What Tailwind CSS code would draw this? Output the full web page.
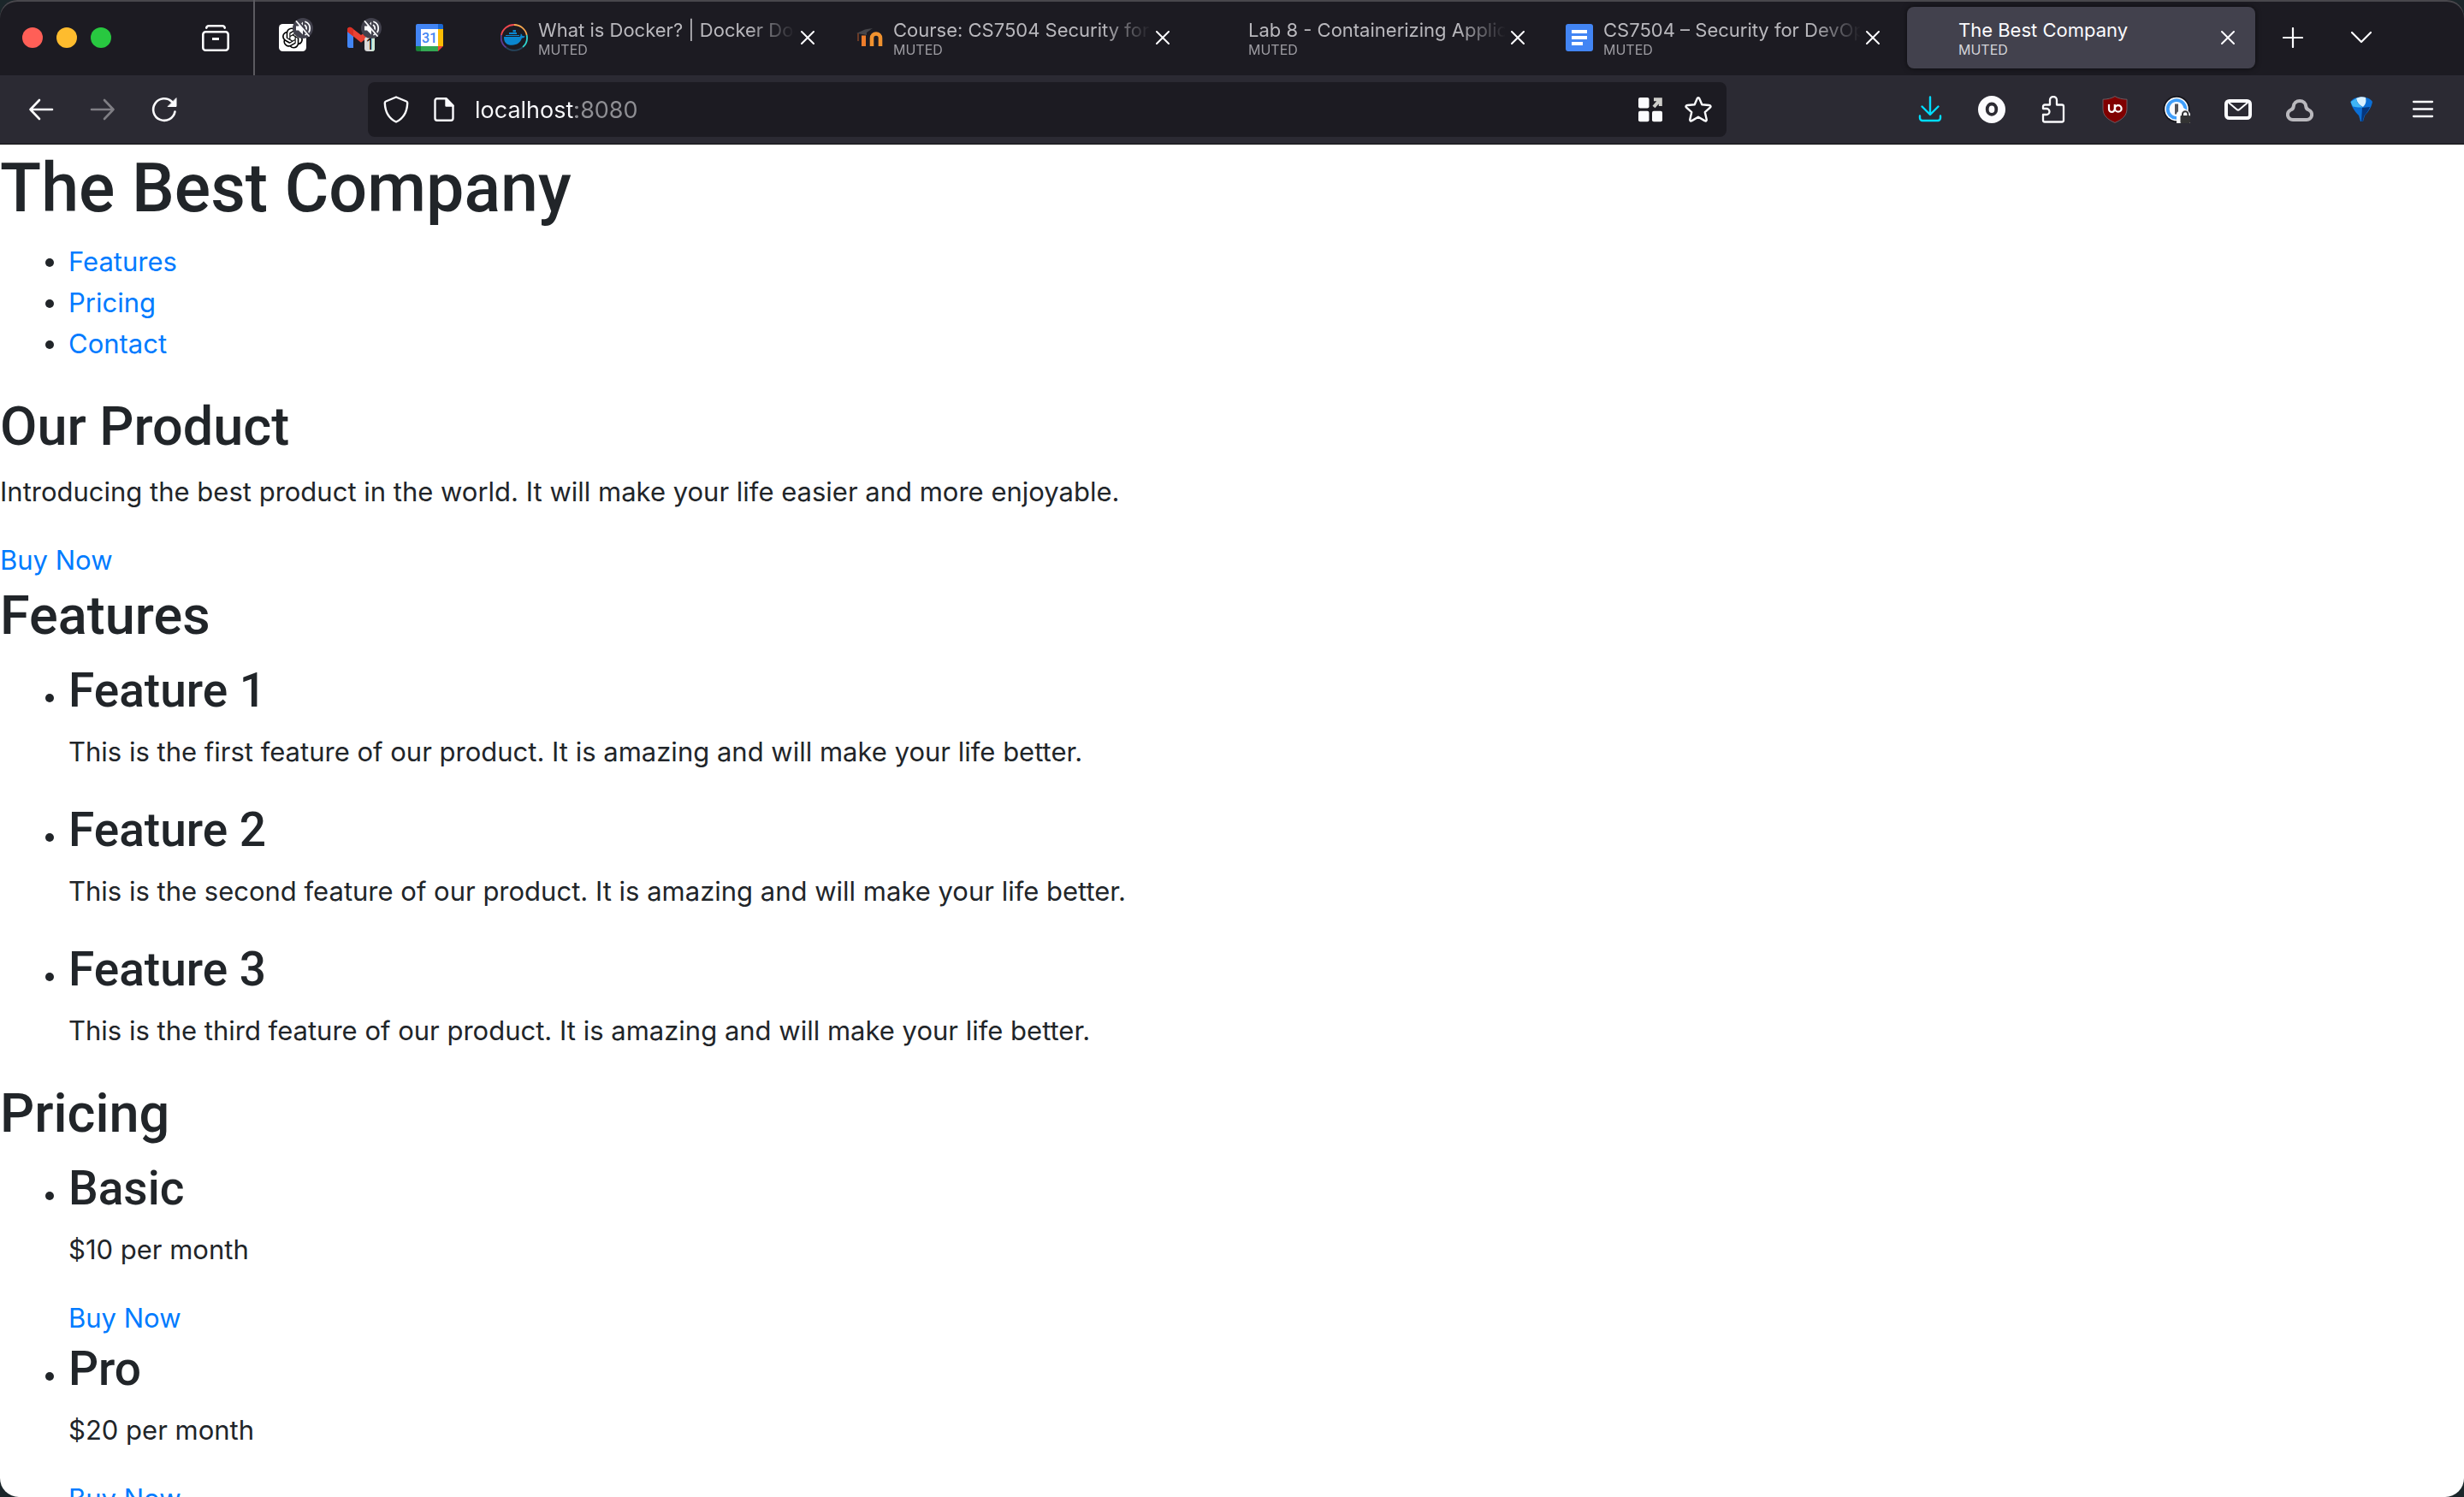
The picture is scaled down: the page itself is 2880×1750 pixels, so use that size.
<!DOCTYPE html>
<html lang="en">
<head>
<meta charset="utf-8">
<title>The Best Company</title>
<script src="https://cdn.jsdelivr.net/npm/@tailwindcss/browser@4"></script>
</head>
<body class="flex h-screen flex-col overflow-hidden bg-[#1b262a] font-['Inter',sans-serif] text-[#212529]">

<svg class="hidden" aria-hidden="true">
  <symbol id="close" viewBox="0 0 16 16"><path d="M1 1l14 14M15 1L1 15" fill="none" stroke="currentColor" stroke-width="2" stroke-linecap="round"/></symbol>
  <symbol id="muted" viewBox="0 0 24 24">
    <circle cx="12" cy="12" r="12" fill="#42414d"/>
    <path d="M4 9.500h3l5-5v15l-5-5H4z" fill="#fbfbfe"/>
    <path d="M14.500 8.500a4.500 4.500 0 0 1 0 7M15 4.500a8 8 0 0 1 0 15" fill="none" stroke="#fbfbfe" stroke-width="1.800" stroke-linecap="round"/>
    <path d="M5.500 3l14 17.500" stroke="#42414d" stroke-width="3"/>
    <path d="M4.500 4l14.500 17" stroke="#fbfbfe" stroke-width="1.800" stroke-linecap="round"/>
  </symbol>
</svg>

<!-- Tab strip -->
<header class="flex h-[88px] shrink-0 items-center rounded-t-[20px] bg-[#1c1b22] pr-20 text-[#fbfbfe] shadow-[inset_0_2px_0_#48474c]">
  <div class="flex h-full w-[298px] items-center justify-between border-r-2 border-[#5b5a60] pr-7 pl-[26px]">
    <div class="flex gap-4">
      <button aria-label="Close window" class="size-6 rounded-full bg-[#ff5f57]"></button>
      <button aria-label="Minimize window" class="size-6 rounded-full bg-[#febc2e]"></button>
      <button aria-label="Zoom window" class="size-6 rounded-full bg-[#28c840]"></button>
    </div>
    <button aria-label="View recent browsing">
      <svg class="size-8" viewBox="0 0 32 32" fill="none" stroke="currentColor" stroke-width="2.600" stroke-linecap="round">
        <path d="M5.300 4.700C5.500 3 6.500 2.300 8 2.300h16c1.500 0 2.500.7 2.700 2.400"/>
        <rect x="1.300" y="9.300" width="29.400" height="21.400" rx="3"/>
        <path d="M12 17.500h8" stroke-width="3" stroke-linecap="butt"/>
      </svg>
    </button>
  </div>

  <div class="ml-1 flex">
    <button aria-label="ChatGPT, muted" class="flex h-[72px] w-20 items-center justify-center">
      <span class="relative">
        <svg class="size-8" viewBox="0 0 32 32">
          <rect width="32" height="32" rx="4.500" fill="#fff"/>
          <path transform="translate(4 4.500)" d="M22.2819 9.8211a5.9847 5.9847 0 0 0-.5157-4.9108 6.0462 6.0462 0 0 0-6.5098-2.9A6.0651 6.0651 0 0 0 4.9807 4.1818a5.9847 5.9847 0 0 0-3.9977 2.9 6.0462 6.0462 0 0 0 .7427 7.0966 5.98 5.98 0 0 0 .511 4.9107 6.051 6.051 0 0 0 6.5146 2.9001A5.9847 5.9847 0 0 0 13.2599 24a6.0557 6.0557 0 0 0 5.7718-4.2058 5.9894 5.9894 0 0 0 3.9977-2.9001 6.0557 6.0557 0 0 0-.7475-7.0729zm-9.022 12.6081a4.4755 4.4755 0 0 1-2.8764-1.0408l.1419-.0804 4.7783-2.7582a.7948.7948 0 0 0 .3927-.6813v-6.7369l2.02 1.1686a.071.071 0 0 1 .038.052v5.5826a4.504 4.504 0 0 1-4.4945 4.4944zm-9.6607-4.1254a4.4708 4.4708 0 0 1-.5346-3.0137l.142.0852 4.783 2.7582a.7712.7712 0 0 0 .7806 0l5.8428-3.3685v2.3324a.0804.0804 0 0 1-.0332.0615L9.74 19.9502a4.4992 4.4992 0 0 1-6.1408-1.6464zM2.3408 7.8956a4.485 4.485 0 0 1 2.3655-1.9728V11.6a.7664.7664 0 0 0 .3879.6765l5.8144 3.3543-2.0201 1.1685a.0757.0757 0 0 1-.071 0l-4.8303-2.7865A4.504 4.504 0 0 1 2.3408 7.872zm16.5963 3.8558L13.1038 8.364 15.1192 7.2a.0757.0757 0 0 1 .071 0l4.8303 2.7913a4.4944 4.4944 0 0 1-.6765 8.1042v-5.6772a.79.79 0 0 0-.407-.667zm2.0107-3.0231l-.142-.0852-4.7735-2.7818a.7759.7759 0 0 0-.7854 0L9.409 9.2297V6.8974a.0662.0662 0 0 1 .0284-.0615l4.8303-2.7866a4.4992 4.4992 0 0 1 6.6802 4.66zM8.3065 12.863l-2.02-1.1638a.0804.0804 0 0 1-.038-.0567V6.0742a4.4992 4.4992 0 0 1 7.3757-3.4537l-.142.0805L8.704 5.459a.7948.7948 0 0 0-.3927.6813zm1.0976-2.3654l2.602-1.4998 2.6069 1.4998v2.9994l-2.5974 1.4997-2.6067-1.4997Z" fill="#000"/>
        </svg>
        <svg class="absolute -top-[7px] -right-2 size-6"><use href="#muted"/></svg>
      </span>
    </button>
    <button aria-label="Gmail, 1 unread, muted" class="flex h-[72px] w-20 items-center justify-center">
      <span class="relative">
        <svg class="size-8" viewBox="0 0 32 32">
          <path d="M0 7.500l7 5V28H2a2 2 0 0 1-2-2z" fill="#4285f4"/>
          <path d="M0 9V7c0-3 3-4 5-2.500L16 13l11-8.500v8.500L16 21.700 7 14.500z" fill="#ea4335"/>
          <path d="M0 9V7c0-3 3-4 5-2.500L7 6v8.500z" fill="#d93025"/>
          <rect x="20" y="15" width="12" height="17" rx="3.500" fill="#d8d8d8"/>
          <path d="M28 15h.5a3.500 3.500 0 0 1 3.500 3.500v10a3.500 3.500 0 0 1-3.500 3.500H28z" fill="#cfe8d5"/>
          <text x="26" y="30" text-anchor="middle" font-family="Inter, sans-serif" font-size="17" fill="#000">1</text>
        </svg>
        <svg class="absolute -top-[7px] -right-2 size-6"><use href="#muted"/></svg>
      </span>
    </button>
    <button aria-label="Google Calendar" class="flex h-[72px] w-20 items-center justify-center">
      <svg class="size-8" viewBox="0 0 32 32">
        <path d="M2 0h24v6H6v20H0V2a2 2 0 0 1 2-2z" fill="#4285f4"/>
        <path d="M26 0h4a2 2 0 0 1 2 2v4h-6z" fill="#1967d2"/>
        <path d="M26 6h6v20h-6z" fill="#fbbc04"/>
        <path d="M6 26h20v6H6z" fill="#34a853"/>
        <path d="M0 26h6v6H2a2 2 0 0 1-2-2z" fill="#188038"/>
        <path d="M26 26h6l-6 6z" fill="#ea4335"/>
        <path d="M6 6h20v20H6z" fill="#fff"/>
        <text x="16" y="22" text-anchor="middle" font-family="Roboto, sans-serif" font-size="16" font-weight="500" fill="#4285f4">31</text>
      </svg>
    </button>
  </div>

  <div role="tablist" aria-label="Open tabs" class="ml-[27px] flex min-w-0 flex-1 gap-2">
    <div role="tab" class="flex h-[72px] min-w-0 flex-1 items-center rounded-lg pr-6 pl-4">
      <svg class="size-8 shrink-0" viewBox="0 0 32 32">
        <g fill="none" stroke-width="1.800">
          <path d="M1 13A15 15 0 0 1 16 1" stroke="#f0484f"/><path d="M16 1a15 15 0 0 1 14.700 12" stroke="#fba950"/>
          <path d="M30.700 13A15 15 0 0 1 26 27.200" stroke="#2fd4d0"/><path d="M26 27.200a15 15 0 0 1-19.500.3" stroke="#26455c"/><path d="M6.500 27.500A15 15 0 0 1 1 13" stroke="#5e3c94"/>
        </g>
        <path d="M4 15h18.500c1.200-1 .8-2.800 1.300-3.800 1.200.8 1.700 1.900 1.700 2.900 1-.3 2.300-.2 3.200.5-.7 1.500-2 2-3.700 2-1.700 5-5.500 8.200-11.500 8.200C7 24.800 3.800 21.500 4 15zM6 13h16v1H6zM10 10h9v2h-9zM14.500 7H18v2.500h-3.500z" fill="#0a86cf"/>
      </svg>
      <div class="ml-3 min-w-0 flex-1 overflow-hidden pt-1 whitespace-nowrap [mask-image:linear-gradient(to_right,black_calc(100%-56px),transparent)]">
        <div class="text-[22px] leading-6 text-[#b9b8bd]">What is Docker? | Docker Docs</div>
        <div class="text-base leading-[22px] text-[#9d9ca2]">MUTED</div>
      </div>
      <button aria-label="Close tab" class="ml-[6px]"><svg class="size-4"><use href="#close"/></svg></button>
    </div>
    <div role="tab" class="flex h-[72px] min-w-0 flex-1 items-center rounded-lg pr-6 pl-4">
      <svg class="size-8 shrink-0" viewBox="0 0 32 32" fill="none">
        <path d="M1 11l10-4.500 9-1.500-7 5v3l-5-1z" fill="#46464b"/><path d="M3 11v9" stroke="#6a3a26" stroke-width="2"/>
        <path d="M9.500 26V13.500" stroke="#ee7d2b" stroke-width="5"/>
        <path d="M19 26V16.500a5 5 0 0 1 10 0V26" stroke="#f0922f" stroke-width="4.600"/>
      </svg>
      <div class="ml-3 min-w-0 flex-1 overflow-hidden pt-1 whitespace-nowrap [mask-image:linear-gradient(to_right,black_calc(100%-56px),transparent)]">
        <div class="text-[22px] leading-6 text-[#b9b8bd]">Course: CS7504 Security for DevOps</div>
        <div class="text-base leading-[22px] text-[#9d9ca2]">MUTED</div>
      </div>
      <button aria-label="Close tab" class="ml-[6px]"><svg class="size-4"><use href="#close"/></svg></button>
    </div>
    <div role="tab" class="flex h-[72px] min-w-0 flex-1 items-center rounded-lg pr-6 pl-4">
      <span class="size-8 shrink-0"></span>
      <div class="ml-3 min-w-0 flex-1 overflow-hidden pt-1 whitespace-nowrap [mask-image:linear-gradient(to_right,black_calc(100%-56px),transparent)]">
        <div class="text-[22px] leading-6 text-[#b9b8bd]">Lab 8 - Containerizing Applications</div>
        <div class="text-base leading-[22px] text-[#9d9ca2]">MUTED</div>
      </div>
      <button aria-label="Close tab" class="ml-[6px]"><svg class="size-4"><use href="#close"/></svg></button>
    </div>
    <div role="tab" class="flex h-[72px] min-w-0 flex-1 items-center rounded-lg pr-6 pl-4">
      <svg class="size-8 shrink-0" viewBox="0 0 32 32"><rect width="32" height="32" rx="3" fill="#4285f4"/><path d="M7 7h18v4H7zM7 14h18v4H7zM7 21h13v4H7z" fill="#fff"/></svg>
      <div class="ml-3 min-w-0 flex-1 overflow-hidden pt-1 whitespace-nowrap [mask-image:linear-gradient(to_right,black_calc(100%-56px),transparent)]">
        <div class="text-[22px] leading-6 text-[#b9b8bd]">CS7504 – Security for DevOps</div>
        <div class="text-base leading-[22px] text-[#9d9ca2]">MUTED</div>
      </div>
      <button aria-label="Close tab" class="ml-[6px]"><svg class="size-4"><use href="#close"/></svg></button>
    </div>
    <div role="tab" aria-selected="true" class="flex h-[72px] min-w-0 flex-1 items-center rounded-lg bg-[#42414d] pr-6 pl-4 shadow-[0_0_6px_#0009]">
      <span class="size-8 shrink-0"></span>
      <div class="ml-3 min-w-0 flex-1 overflow-hidden pt-1 whitespace-nowrap">
        <div class="text-[22px] leading-6">The Best Company</div>
        <div class="text-base leading-[22px] text-[#d4d4d9]">MUTED</div>
      </div>
      <button aria-label="Close tab" class="ml-[6px]"><svg class="size-4"><use href="#close"/></svg></button>
    </div>
  </div>

  <button aria-label="New tab" class="ml-1 flex w-20 justify-center"><svg class="size-6" viewBox="0 0 24 24" fill="none" stroke="currentColor" stroke-width="2.200" stroke-linecap="round"><path d="M12 1v22M1 12h22"/></svg></button>
  <button aria-label="List all tabs" class="flex w-20 justify-center"><svg class="size-6" viewBox="0 0 24 24" fill="none" stroke="currentColor" stroke-width="2.200" stroke-linecap="round" stroke-linejoin="round"><path d="M1 6l11 11L23 6"/></svg></button>
</header>

<!-- Navigation toolbar -->
<nav aria-label="Navigation" class="flex h-[81px] shrink-0 items-center border-b border-[#0c0c0d] bg-[#2b2a33] px-3 text-[#fbfbfe]">
  <button aria-label="Back" class="flex w-[72px] justify-center"><svg class="size-8" viewBox="0 0 32 32" fill="none" stroke="currentColor" stroke-width="2.600" stroke-linecap="round" stroke-linejoin="round"><path d="M29 16H3.500M14 5L3.500 16 14 27"/></svg></button>
  <button aria-label="Forward" disabled class="flex w-[72px] justify-center text-[#7f7e84]"><svg class="size-8" viewBox="0 0 32 32" fill="none" stroke="currentColor" stroke-width="2.600" stroke-linecap="round" stroke-linejoin="round"><path d="M3 16h25.500M18 5l10.500 11L18 27"/></svg></button>
  <button aria-label="Reload" class="flex w-[72px] justify-center"><svg class="size-8" viewBox="0 0 32 32" fill="none" stroke="currentColor" stroke-width="2.600" stroke-linecap="round"><path d="M28.500 18.500A12.800 12.800 0 1 1 25 7"/><path d="M30 3v9.500H20.500z" fill="currentColor" stroke-width="1" stroke-linejoin="round"/></svg></button>

  <div class="mx-[202px] flex h-16 flex-1 items-center rounded-lg bg-[#1c1b22] px-[17px]">
    <svg class="size-8" viewBox="0 0 32 32" fill="none" stroke="currentColor" stroke-width="2.400" stroke-linejoin="round"><path d="M16 1.500l12 5c1 .4 1.300 1 1.200 2C28.800 19 24.500 26.500 16 30.500 7.500 26.500 3.200 19 2.800 8.500c-.1-1 .2-1.600 1.200-2z"/></svg>
    <svg class="ml-6 size-8" viewBox="0 0 32 32" fill="none" stroke="currentColor" stroke-width="2.400" stroke-linejoin="round"><path d="M18.500 3.300H8a2.500 2.500 0 0 0-2.500 2.500v20.400A2.500 2.500 0 0 0 8 28.700h16a2.500 2.500 0 0 0 2.500-2.500V11.500z"/><path d="M18.500 3.300v8.200h8z" fill="currentColor"/></svg>
    <input aria-label="Search or enter address" value="localhost:8080" class="ml-5 h-full min-w-0 flex-1 bg-[linear-gradient(to_right,#fbfbfe_118px,#8f8f94_118px)] bg-clip-text text-[27px] text-transparent outline-none">
    <button aria-label="Open in app"><svg class="size-8" viewBox="0 0 32 32"><g fill="#fbfbfe"><rect x="2" y="2" width="12.500" height="12.500" rx="2"/><rect x="2" y="17.800" width="12.500" height="12.500" rx="2"/><rect x="18" y="17.800" width="12" height="12.500" rx="2"/></g><path d="M20 4.200h7.800V12M27 5l-7 8" fill="none" stroke="#cfcfcb" stroke-width="4"/></svg></button>
    <button aria-label="Bookmark this page" class="ml-6"><svg class="size-8" viewBox="0 0 32 32" fill="none" stroke="currentColor" stroke-width="2.400" stroke-linejoin="round"><path d="M14.700 3.200c.5-1.200 2.100-1.200 2.600 0l3 7 8.300.8c1.800.2 2.500 1.500 1.300 2.700l-6.100 5.500 1.900 8.300c.3 1.500-.9 2.400-2.200 1.600L16 24.800l-7.500 4.300c-1.300.8-2.500-.1-2.200-1.600l1.900-8.300-6.100-5.500C.9 12.500 1.600 11.200 3.400 11l8.300-.8z"/></svg></button>
  </div>

  <button aria-label="Downloads" class="flex w-[72px] justify-center text-[#00ddff]"><svg class="size-8" viewBox="0 0 32 32" fill="none" stroke="currentColor" stroke-width="2.400" stroke-linecap="round" stroke-linejoin="round"><path d="M16 1.500v20M6.500 12.500L16 22l9.500-9.500M4 23.500V26a3 3 0 0 0 3 3h18a3 3 0 0 0 3-3v-2.500"/></svg></button>
  <button aria-label="Okta" class="flex w-[72px] justify-center"><svg class="size-8" viewBox="0 0 32 32"><circle cx="16" cy="16" r="16" fill="#fbfbfe"/><ellipse cx="16" cy="15.700" rx="5.300" ry="6.200" fill="none" stroke="#2b2a33" stroke-width="3.800"/></svg></button>
  <button aria-label="Extensions" class="flex w-[72px] justify-center"><svg class="size-8" viewBox="0 0 32 32" fill="none" stroke="currentColor" stroke-width="2.300" stroke-linejoin="round"><path d="M4 15v-2.500a2 2 0 0 1 2-2h6V5a4 4 0 0 1 8 0v5.500h6a2 2 0 0 1 2 2v16a2 2 0 0 1-2 2H6a2 2 0 0 1-2-2V22h4a3.500 3.500 0 0 0 0-7z"/></svg></button>
  <button aria-label="uBlock Origin" class="flex w-[72px] justify-center"><svg class="size-8" viewBox="0 0 32 32"><path d="M16 .6c4 2.400 8.500 3.400 14 3.600v11c0 8-5.500 12.600-14 16.200C7.500 27.800 2 23.200 2 15.200v-11C7.500 4 12 3 16 .6z" fill="#800000" stroke="#6d5b62" stroke-width="1"/><g fill="none" stroke="#fff" stroke-width="2.200"><path d="M9 10v5.500a3.400 3.400 0 0 0 3.400 3.400c2.300 0 3-1.500 3.400-3.400V10"/><circle cx="19.800" cy="14.900" r="3.800"/></g></svg></button>
  <button aria-label="1Password" class="flex w-[72px] justify-center"><svg class="size-8" viewBox="0 0 32 32"><circle cx="16" cy="15.500" r="15.500" fill="#15151b"/><circle cx="16" cy="15.500" r="13.800" fill="#fbfbfe"/><circle cx="16" cy="15.500" r="10.300" fill="none" stroke="#409ffb" stroke-width="3.800"/><rect x="14" y="9.500" width="4" height="12" fill="#55555a"/><path d="M16 32V22a4 4 0 0 1 4-4l4-4 6 4 2 3v11z" fill="#fff"/><rect x="20.500" y="23" width="11.500" height="9" rx="1" fill="#333"/><path d="M23 24v-2.500a3.200 3.200 0 0 1 6.400 0V24" fill="none" stroke="#333" stroke-width="2"/></svg></button>
  <button aria-label="Mail" class="flex w-[72px] justify-center"><svg class="size-8" viewBox="0 0 32 32" fill="none" stroke="currentColor"><rect x="2" y="6" width="28" height="20" rx="3.500" stroke-width="4"/><path d="M5 8l9.500 8a2.300 2.300 0 0 0 3 0L27 8" stroke-width="2"/></svg></button>
  <button aria-label="Cloud extension" class="flex w-[72px] justify-center text-[#b9b8bd]"><svg class="size-8" viewBox="0 0 32 32" fill="none" stroke="currentColor" stroke-width="4" stroke-linejoin="round"><path d="M8 28a6 6 0 0 1-2.500-11.500C7.500 15.700 8.500 15 8.700 12.500 9 8.500 12 6 16 6s7 2.500 7.300 6.500c.2 2.500 1.200 3.200 3.200 4A6 6 0 0 1 24 28z"/></svg></button>
  <button aria-label="Balloon extension" class="flex w-[72px] justify-center"><svg class="size-8" viewBox="0 0 32 32"><path d="M3.500 7C6 3 10 1.500 16 1.500S26.500 3 29 7c-1 6-4.500 11.500-9 16l-2 7h-3l-2-7C8.500 18.500 4.500 13 3.500 7z" fill="#0b6fd6"/><path d="M10 3c4-2 8-2 11-1 1 5 0 8-3 11-4-2-7-5-8-10z" fill="#d9f1ff"/><path d="M3.500 7L10 3c.5 5 4 8.500 8 10.500-4 0-8 0-12-1z" fill="#3fb5f5"/><path d="M17 14l9-1c-1.500 4-4 7.500-6.500 10l-2 7H16z" fill="#06367c"/></svg></button>
  <button aria-label="Application menu" class="flex w-[72px] justify-center"><svg class="size-8" viewBox="0 0 32 32" fill="none" stroke="currentColor" stroke-width="2.300" stroke-linecap="round"><path d="M5 7h22M5 15.500h22M5 24h22"/></svg></button>
</nav>

<!-- Page -->
<main class="min-h-0 flex-1 overflow-hidden rounded-b-[22px] bg-white pt-px text-[31px] leading-[48px]">
  <header>
    <h1 class="mb-4 pt-1 font-['Roboto',sans-serif] text-[79px] leading-[92px] font-medium">The Best Company</h1>
    <ul class="mb-8 list-disc pl-20">
      <li><a href="#features" class="text-[#007bff]">Features</a></li>
      <li><a href="#pricing" class="text-[#007bff]">Pricing</a></li>
      <li><a href="#contact" class="text-[#007bff]">Contact</a></li>
    </ul>
  </header>
  <section>
    <h2 class="mb-4 pt-1 font-['Roboto',sans-serif] text-[63px] leading-[73px] font-medium">Our Product</h2>
    <p class="mb-8">Introducing the best product in the world. It will make your life easier and more enjoyable.</p>
    <a href="#pricing" class="text-[#007bff]">Buy Now</a>
  </section>
  <section id="features">
    <h2 class="mb-4 pt-1 font-['Roboto',sans-serif] text-[63px] leading-[73px] font-medium">Features</h2>
    <ul class="list-disc pl-20">
      <li>
        <h3 class="mb-4 pt-1 font-['Roboto',sans-serif] text-[55px] leading-[63px] font-medium">Feature 1</h3>
        <p class="mb-8">This is the first feature of our product. It is amazing and will make your life better.</p>
      </li>
      <li>
        <h3 class="mb-4 pt-1 font-['Roboto',sans-serif] text-[55px] leading-[63px] font-medium">Feature 2</h3>
        <p class="mb-8">This is the second feature of our product. It is amazing and will make your life better.</p>
      </li>
      <li>
        <h3 class="mb-4 pt-1 font-['Roboto',sans-serif] text-[55px] leading-[63px] font-medium">Feature 3</h3>
        <p class="mb-8">This is the third feature of our product. It is amazing and will make your life better.</p>
      </li>
    </ul>
  </section>
  <section id="pricing">
    <h2 class="mb-4 pt-1 font-['Roboto',sans-serif] text-[63px] leading-[73px] font-medium">Pricing</h2>
    <ul class="list-disc pl-20">
      <li>
        <h3 class="mb-4 pt-1 font-['Roboto',sans-serif] text-[55px] leading-[63px] font-medium">Basic</h3>
        <p class="mb-8">$10 per month</p>
        <a href="#buy-basic" class="text-[#007bff]">Buy Now</a>
      </li>
      <li>
        <h3 class="mb-4 pt-1 font-['Roboto',sans-serif] text-[55px] leading-[63px] font-medium">Pro</h3>
        <p class="mb-8">$20 per month</p>
        <a href="#buy-pro" class="text-[#007bff]">Buy Now</a>
      </li>
    </ul>
  </section>
</main>
</body>
</html>
